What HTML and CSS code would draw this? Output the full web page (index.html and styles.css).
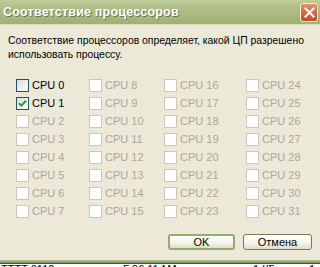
FILE: index.html
```html
<!DOCTYPE html>
<html lang="ru">
<head>
    <meta charset="UTF-8">
    <title>Соответствие процессоров</title>
    <link rel="stylesheet" href="styles.css">
</head>
<body>
    <div class="window">
        <!-- Title bar -->
        <div class="titlebar">
            <span class="title">Соответствие процессоров</span>
            <button class="close">
                <svg width="11" height="11" viewBox="0 0 11 11">
                    <path d="M1.5 1.5 L9.5 9.5 M9.5 1.5 L1.5 9.5" stroke="#fff" stroke-width="2" stroke-linecap="square"/>
                </svg>
            </button>
        </div>

        <div class="content">
            <p class="desc">Соответствие процессоров определяет, какой ЦП разрешено использовать процессу.</p>

            <div class="cpu-grid">
                <label class="cpu"><span class="box"></span>CPU 0</label>
                <label class="cpu off"><span class="box"></span>CPU 8</label>
                <label class="cpu off"><span class="box"></span>CPU 16</label>
                <label class="cpu off"><span class="box"></span>CPU 24</label>

                <label class="cpu"><span class="box checked">
                    <svg width="9" height="9" viewBox="0 0 9 9"><path d="M1 4.2 L3.4 6.6 L8 1.8" stroke="#21a121" stroke-width="2" fill="none"/></svg>
                </span>CPU 1</label>
                <label class="cpu off"><span class="box"></span>CPU 9</label>
                <label class="cpu off"><span class="box"></span>CPU 17</label>
                <label class="cpu off"><span class="box"></span>CPU 25</label>

                <label class="cpu off"><span class="box"></span>CPU 2</label>
                <label class="cpu off"><span class="box"></span>CPU 10</label>
                <label class="cpu off"><span class="box"></span>CPU 18</label>
                <label class="cpu off"><span class="box"></span>CPU 26</label>

                <label class="cpu off"><span class="box"></span>CPU 3</label>
                <label class="cpu off"><span class="box"></span>CPU 11</label>
                <label class="cpu off"><span class="box"></span>CPU 19</label>
                <label class="cpu off"><span class="box"></span>CPU 27</label>

                <label class="cpu off"><span class="box"></span>CPU 4</label>
                <label class="cpu off"><span class="box"></span>CPU 12</label>
                <label class="cpu off"><span class="box"></span>CPU 20</label>
                <label class="cpu off"><span class="box"></span>CPU 28</label>

                <label class="cpu off"><span class="box"></span>CPU 5</label>
                <label class="cpu off"><span class="box"></span>CPU 13</label>
                <label class="cpu off"><span class="box"></span>CPU 21</label>
                <label class="cpu off"><span class="box"></span>CPU 29</label>

                <label class="cpu off"><span class="box"></span>CPU 6</label>
                <label class="cpu off"><span class="box"></span>CPU 14</label>
                <label class="cpu off"><span class="box"></span>CPU 22</label>
                <label class="cpu off"><span class="box"></span>CPU 30</label>

                <label class="cpu off"><span class="box"></span>CPU 7</label>
                <label class="cpu off"><span class="box"></span>CPU 15</label>
                <label class="cpu off"><span class="box"></span>CPU 23</label>
                <label class="cpu off"><span class="box"></span>CPU 31</label>
            </div>

            <div class="actions">
                <button class="btn default">OK</button>
                <button class="btn">Отмена</button>
            </div>
        </div>

        <div class="frame-bottom"></div>
        <!-- window underneath, mostly hidden -->
        <div class="behind">
            <span class="b1">TTTT 0110</span>
            <span class="b2">Г 96 11 МА</span>
            <span class="b3">1 КГ</span>
            <span class="b4">1 0</span>
        </div>
    </div>
</body>
</html>
```

FILE: styles.css
```css
body {
    margin: 0;
    background: #fff;
    font-family: "Liberation Sans", Arial, sans-serif;
    font-size: 11px;
}

.window {
    width: 320px;
    height: 267px;
    display: flex;
    flex-direction: column;
    background: #ece9d8;
    overflow: hidden;
}

.titlebar {
    height: 24px;
    flex: none;
    display: flex;
    align-items: center;
    justify-content: space-between;
    padding: 0 2px 0 3px;
    background: linear-gradient(to bottom, #c0cd99 0%, #b0bf88 30%, #a7b77e 70%, #9fb076 100%);
    border-bottom: 1px solid #d4dcb8;
}

.title {
    color: #fff;
    font-weight: bold;
    font-size: 12.5px;
    text-shadow: 1px 1px 0 #6d7a4c;
    letter-spacing: 0.2px;
}

.close {
    width: 18px;
    height: 19px;
    padding: 0;
    display: flex;
    align-items: center;
    justify-content: center;
    border: 1px solid #f4efe4;
    border-radius: 3px;
    background: linear-gradient(to bottom, #ea8d68 0%, #db6640 50%, #c84c24 100%);
}

.content {
    flex: 1;
    padding: 9px 8px 0 8px;
}

.desc {
    margin: 0;
    line-height: 14px;
    font-size: 10.4px;
    color: #000;
    width: 300px;
}

.cpu-grid {
    display: grid;
    grid-template-columns: 73px 75px 82px auto;
    grid-auto-rows: 18px;
    margin-top: 14px;
    padding-left: 8px;
}

.cpu {
    display: flex;
    align-items: center;
    color: #000;
}

.cpu.off {
    color: #aca899;
}

.box {
    width: 11px;
    height: 11px;
    margin-right: 3px;
    border: 1px solid #1c5180;
    background: linear-gradient(135deg, #dcdcd7 0%, #fdfdfb 100%);
    display: flex;
    align-items: center;
    justify-content: center;
}

.cpu.off .box {
    border-color: #cac8bb;
    background: #fff;
}

.actions {
    display: flex;
    justify-content: flex-end;
    gap: 8px;
    margin-top: 14px;
}

.btn {
    height: 16px;
    width: 69px;
    padding: 0;
    font-family: "Liberation Sans", Arial, sans-serif;
    font-size: 11px;
    color: #000;
    border: 1px solid #6f7a58;
    border-radius: 3px;
    background: linear-gradient(to bottom, #fffffc 0%, #f3f2ea 60%, #dedbca 100%);
}

.btn.default {
    width: 67px;
    border: 2px solid #93ad6a;
}

.frame-bottom {
    height: 3px;
    flex: none;
    background: linear-gradient(to bottom, #b6c59a, #7d9163);
    border-bottom: 1px solid #4a5636;
}

.behind {
    height: 3px;
    flex: none;
    position: relative;
    background: #fff;
    overflow: hidden;
    font-size: 11px;
    line-height: 11px;
}

.behind span {
    position: absolute;
    top: 0;
}

.b1 { left: 1px; }
.b2 { left: 123px; }
.b3 { left: 253px; }
.b4 { left: 309px; }
```
